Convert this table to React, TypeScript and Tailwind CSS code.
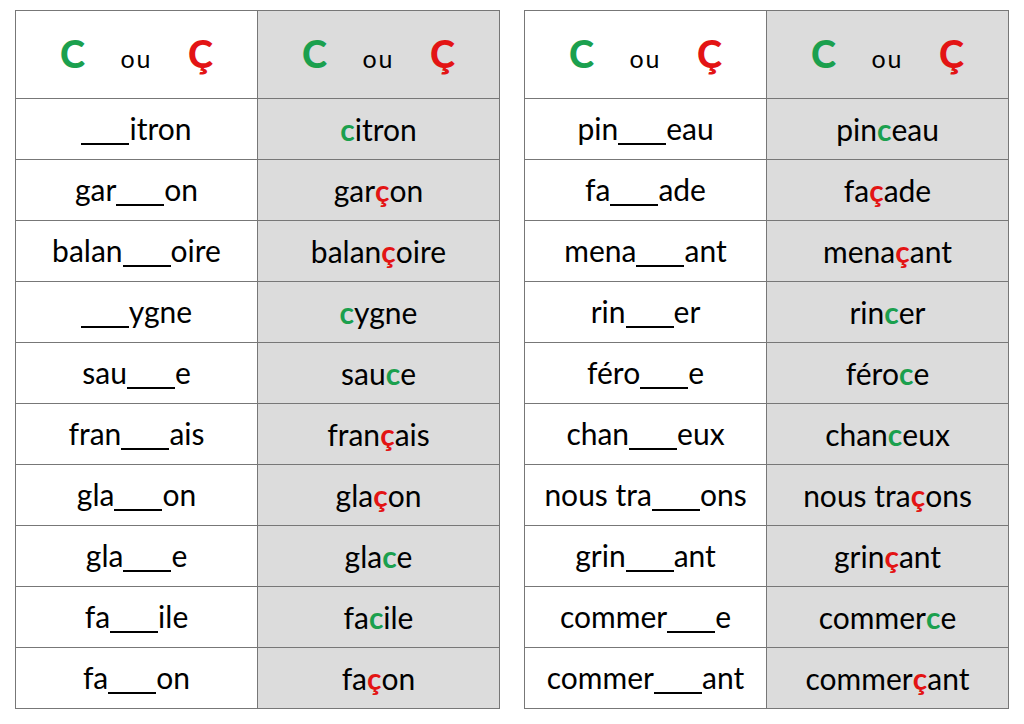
const G = 'text-[#1ba04e]'
const R = 'text-[#e31414]'

type Row = { pre: string; letter: string; post: string }

const left: Row[] = [
  { pre: '', letter: 'c', post: 'itron' },
  { pre: 'gar', letter: 'ç', post: 'on' },
  { pre: 'balan', letter: 'ç', post: 'oire' },
  { pre: '', letter: 'c', post: 'ygne' },
  { pre: 'sau', letter: 'c', post: 'e' },
  { pre: 'fran', letter: 'ç', post: 'ais' },
  { pre: 'gla', letter: 'ç', post: 'on' },
  { pre: 'gla', letter: 'c', post: 'e' },
  { pre: 'fa', letter: 'c', post: 'ile' },
  { pre: 'fa', letter: 'ç', post: 'on' },
]

const right: Row[] = [
  { pre: 'pin', letter: 'c', post: 'eau' },
  { pre: 'fa', letter: 'ç', post: 'ade' },
  { pre: 'mena', letter: 'ç', post: 'ant' },
  { pre: 'rin', letter: 'c', post: 'er' },
  { pre: 'féro', letter: 'c', post: 'e' },
  { pre: 'chan', letter: 'c', post: 'eux' },
  { pre: 'nous tra', letter: 'ç', post: 'ons' },
  { pre: 'grin', letter: 'ç', post: 'ant' },
  { pre: 'commer', letter: 'c', post: 'e' },
  { pre: 'commer', letter: 'ç', post: 'ant' },
]

function Header({ shaded }: { shaded?: boolean }) {
  return (
    <div
      className={
        'flex-1 h-[87px] flex items-center justify-center pb-1 ' +
        (shaded ? 'bg-[#dcdcdc] border-l border-[#777]' : 'bg-white')
      }
    >
      <div className="flex items-baseline gap-[31px] leading-none">
        <span className={'w-[31px] text-center text-[38px] font-black ' + G}>C</span>
        <span className="w-[35px] text-center text-[25px] text-black tracking-[2px]">ou</span>
        <span className={'w-[31px] text-center text-[38px] font-black ' + R}>Ç</span>
      </div>
    </div>
  )
}

function Blank() {
  return <span className="inline-block w-[48px] h-[2px] bg-black align-[-5px]" />
}

function Table({ rows }: { rows: Row[] }) {
  return (
    <div className="w-[485px] border border-[#777] flex flex-col">
      <div className="flex">
        <Header />
        <Header shaded />
      </div>
      {rows.map((r, i) => (
        <div key={i} className="flex h-[61px] border-t border-[#777] text-[30px] leading-none text-black">
          <div className="flex-1 flex items-center justify-center bg-white whitespace-pre">
            <span>
              {r.pre}
              <Blank />
              {r.post}
            </span>
          </div>
          <div className="flex-1 flex items-center justify-center bg-[#dcdcdc] border-l border-[#777] whitespace-pre">
            <span>
              {r.pre}
              <span className={'font-bold ' + (r.letter === 'c' ? G : R)}>{r.letter}</span>
              {r.post}
            </span>
          </div>
        </div>
      ))}
    </div>
  )
}

export default function App() {
  return (
    <div
      className="w-[1024px] h-[724px] bg-white flex items-start gap-[24px] pl-[15px] pt-[10px]"
      style={{ fontFamily: 'Lato, "Noto Sans", sans-serif' }}
    >
      <Table rows={left} />
      <Table rows={right} />
    </div>
  )
}
